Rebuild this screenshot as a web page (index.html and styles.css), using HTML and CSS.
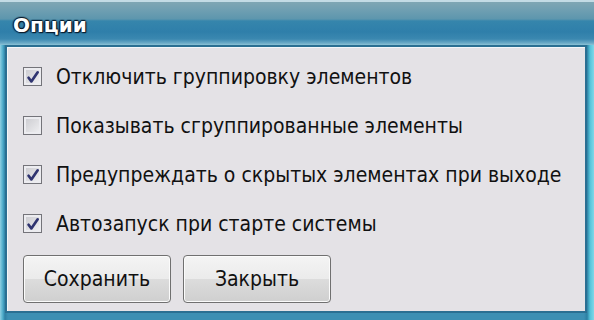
FILE: index.html
```html
<!DOCTYPE html>
<html lang="ru">
<head>
<meta charset="utf-8">
<title>Опции</title>
<link rel="stylesheet" href="styles.css">
</head>
<body>
<div class="window">
  <div class="titlebar"><span class="title">Опции</span></div>
  <div class="content">
    <div class="options">
      <label class="option"><span class="box checked"><svg viewBox="0 0 12 12" class="tick"><path d="M2.2 6.6 L4.6 9.8 L10 2" /></svg></span><span class="label">Отключить группировку элементов</span></label>
      <label class="option"><span class="box"></span><span class="label">Показывать сгруппированные элементы</span></label>
      <label class="option"><span class="box checked"><svg viewBox="0 0 12 12" class="tick"><path d="M2.2 6.6 L4.6 9.8 L10 2" /></svg></span><span class="label">Предупреждать о скрытых элементах при выходе</span></label>
      <label class="option"><span class="box checked"><svg viewBox="0 0 12 12" class="tick"><path d="M2.2 6.6 L4.6 9.8 L10 2" /></svg></span><span class="label">Автозапуск при старте системы</span></label>
    </div>
    <div class="buttons">
      <button class="btn">Сохранить</button>
      <button class="btn">Закрыть</button>
    </div>
  </div>
</div>
</body>
</html>
```
FILE: styles.css
```css
html, body {
  margin: 0;
  padding: 0;
}
body {
  width: 594px;
  height: 320px;
  overflow: hidden;
  font-family: "DejaVu Sans Condensed", "DejaVu Sans", Tahoma, sans-serif;
}
.window {
  box-sizing: border-box;
  width: 594px;
  height: 320px;
  display: flex;
  flex-direction: column;
  background: linear-gradient(to right, #8fcfe2 0px, #4aa9c8 3px, #2f7fa3 5px, #3c8fb3 8px, #3c8fb3 584px, #2c7fa2 587px, #54c3da 590px, #7fd8e8 594px);
  border-top: 2px solid #c3dbe5;
}
.titlebar {
  height: 43px;
  flex: none;
  box-sizing: border-box;
  padding: 11px 0 0 13px;
  background: linear-gradient(to bottom, #7fa6b4 0px, #6f9fb2 8px, #5d96ad 17px, #3585ac 19px, #2f7faa 30px, #3b88b0 37px, #6aaac6 41px, #8cc3d6 43px);
}
.title {
  font-family: "DejaVu Sans", Tahoma, sans-serif;
  font-weight: bold;
  font-size: 20px;
  line-height: 24px;
  color: #ffffff;
  text-shadow: 0 0 2px #08192a, 0 0 2px #08192a, 1px 1px 1px #08192a, -1px 0 1px #08192a, 0 -1px 1px #08192a;
}
.content {
  flex: 1;
  margin: 0 7px 7px 5px;
  border: 2px solid #2a6f92;
  box-shadow: inset 1px 1px 0 #f3f6f8;
  background: #e4e2e6;
  padding: 20px 16px 0 16px;
  display: flex;
  flex-direction: column;
}
.options {
  display: flex;
  flex-direction: column;
  gap: 30px;
}
.option {
  display: flex;
  align-items: center;
  height: 19px;
  gap: 14px;
}
.box {
  box-sizing: border-box;
  width: 19px;
  height: 19px;
  flex: none;
  border: 1px solid #74747a;
  background: linear-gradient(135deg, #c9c9ce, #f2f2f4);
  box-shadow: inset 0 0 0 2px #ececf0;
  display: flex;
  align-items: center;
  justify-content: center;
}
.tick {
  width: 14px;
  height: 14px;
  fill: none;
  stroke: #2f3470;
  stroke-width: 2.3;
  stroke-linecap: round;
  stroke-linejoin: round;
}
.label {
  font-size: 21px;
  color: #111;
  white-space: nowrap;
}
.buttons {
  display: flex;
  gap: 12px;
  margin-top: 22px;
}
.btn {
  box-sizing: border-box;
  width: 148px;
  height: 48px;
  border: 1px solid #707070;
  border-radius: 4px;
  background: linear-gradient(to bottom, #f4f4f4 0%, #ebebeb 50%, #dcdcdc 51%, #cfcfcf 100%);
  box-shadow: inset 0 0 0 1px #fbfbfb;
  font-family: "DejaVu Sans Condensed", "DejaVu Sans", Tahoma, sans-serif;
  font-size: 21px;
  color: #111;
  padding: 0;
}
```
